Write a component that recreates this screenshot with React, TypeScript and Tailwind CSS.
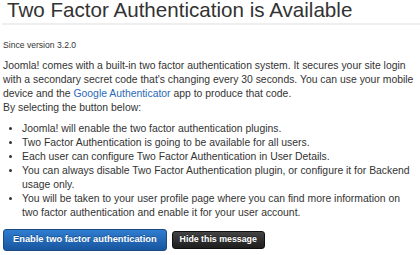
import React from 'react';

const items: string[] = [
  'Joomla! will enable the two factor authentication plugins.',
  'Two Factor Authentication is going to be available for all users.',
  'Each user can configure Two Factor Authentication in User Details.',
  'You can always disable Two Factor Authentication plugin, or configure it for Backend usage only.',
  'You will be taken to your user profile page where you can find more information on two factor authentication and enable it for your user account.',
];

export default function App() {
  return (
    <div className="w-[420px] h-[255px] overflow-hidden bg-white text-[#333] font-['Liberation_Sans',Arial,sans-serif]">
      <h2 className="pl-[7px] text-[20.6px] leading-[20px] text-[#333]">Two Factor Authentication is Available</h2>
      <div className="ml-[2px] mt-[3px] border-t-2 border-[#eeeeee]" />
      <div className="px-[3px]">
        <p className="mt-[14px] text-[8.6px] leading-[12px]">Since version 3.2.0</p>
        <p className="mt-[8px] text-[10.4px] leading-[14px]">
          Joomla! comes with a built-in two factor authentication system. It secures your site login with a secondary secret code that's changing every 30 seconds. You can use your mobile device and the{' '}
          <a className="text-[#2a69b8]">Google Authenticator</a> app to produce that code.
          <br />
          By selecting the button below:
        </p>
        <ul className="mt-[7px] pl-[19px] list-disc text-[10.4px] leading-[14px]">
          {items.map((t) => (
            <li key={t}>{t}</li>
          ))}
        </ul>
        <div className="mt-[9px] flex items-center gap-[5px]">
          <button className="h-[22px] px-[9px] rounded-[3px] border border-[#1c4a85] bg-gradient-to-b from-[#2f7dd1] to-[#18569f] text-white text-[9.3px] font-bold [text-shadow:0_-1px_0_rgba(0,0,0,0.3)]">
            Enable two factor authentication
          </button>
          <button className="h-[18px] px-[7px] rounded-[3px] border border-[#111] bg-gradient-to-b from-[#444] to-[#1e1e1e] text-white text-[8.8px] font-bold [text-shadow:0_-1px_0_rgba(0,0,0,0.4)]">
            Hide this message
          </button>
        </div>
      </div>
    </div>
  );
}
